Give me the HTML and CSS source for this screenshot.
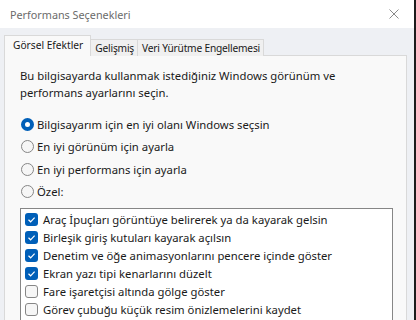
FILE: index.html
```html
<!DOCTYPE html>
<html lang="tr">
<head>
    <meta charset="UTF-8">
    <title>Performans Seçenekleri</title>
    <link rel="stylesheet" href="styles.css">
</head>
<body>
    <div class="window">
        <div class="titlebar">
            <span class="title">Performans Seçenekleri</span>
            <svg class="close" width="10" height="10" viewBox="0 0 10 10">
                <path d="M0.5 0.5 L9.5 9.5 M9.5 0.5 L0.5 9.5" stroke="#8a8a8a" stroke-width="1" fill="none"/>
            </svg>
        </div>
        <div class="dialog">
            <div class="tabs">
                <div class="tab active">Görsel Efektler</div>
                <div class="tab">Gelişmiş</div>
                <div class="tab">Veri Yürütme Engellemesi</div>
            </div>
            <div class="panel">
                <p class="intro">Bu bilgisayarda kullanmak istediğiniz Windows görünüm ve performans ayarlarını seçin.</p>
                <div class="radios">
                    <label class="radio"><span class="dot checked"></span>Bilgisayarım için en iyi olanı Windows seçsin</label>
                    <label class="radio"><span class="dot"></span>En iyi görünüm için ayarla</label>
                    <label class="radio"><span class="dot"></span>En iyi performans için ayarla</label>
                    <label class="radio"><span class="dot"></span>Özel:</label>
                </div>
                <div class="list">
                    <div class="item"><span class="box checked"></span>Araç İpuçları görüntüye belirerek ya da kayarak gelsin</div>
                    <div class="item"><span class="box checked"></span>Birleşik giriş kutuları kayarak açılsın</div>
                    <div class="item"><span class="box checked"></span>Denetim ve öğe animasyonlarını pencere içinde göster</div>
                    <div class="item"><span class="box checked"></span>Ekran yazı tipi kenarlarını düzelt</div>
                    <div class="item"><span class="box"></span>Fare işaretçisi altında gölge göster</div>
                    <div class="item"><span class="box"></span>Görev çubuğu küçük resim önizlemelerini kaydet</div>
                    <div class="item"><span class="box checked"></span></div>
                </div>
            </div>
        </div>
    </div>
</body>
</html>
```

FILE: styles.css
```css
* {
    margin: 0;
    padding: 0;
    box-sizing: border-box;
}

body {
    width: 416px;
    height: 320px;
    overflow: hidden;
    background: #1c1c1c;
    font-family: 'Noto Sans', 'Open Sans', sans-serif;
    font-size: 11.3px;
    color: #1a1a1a;
}

.window {
    width: 414px;
    height: 320px;
    background: #eef0f4;
    overflow: hidden;
}

.titlebar {
    height: 28px;
    background: #ffffff;
    display: flex;
    align-items: center;
    justify-content: space-between;
    padding: 0 15px 0 10px;
}

.title {
    color: #6b6b6b;
    font-size: 10.8px;
}

.dialog {
    padding: 7px 7px 0 4px;
}

.tabs {
    display: flex;
    align-items: flex-end;
    height: 21px;
    position: relative;
    z-index: 1;
    font-size: 10.2px;
}

.tab {
    height: 17px;
    padding: 0 3px 0 4px;
    line-height: 16px;
    border: 1px solid #d9d9d9;
    border-bottom: none;
    background: #f0f0f0;
    margin-left: -1px;
    letter-spacing: -0.2px;
}

.tab.active {
    height: 21px;
    padding: 0 7px 0 8px;
    line-height: 18px;
    background: #f9f9f9;
    margin-left: 0;
    letter-spacing: 0;
}

.panel {
    background: #f9f9f9;
    border: 1px solid #d9d9d9;
    height: 300px;
    margin-top: -1px;
    padding: 11px 13px 0 15px;
}

.intro {
    width: 340px;
    line-height: 17px;
}

.radios {
    display: flex;
    flex-direction: column;
    margin-top: 12px;
}

.radio {
    display: flex;
    align-items: center;
    height: 22.5px;
}

.dot {
    width: 13px;
    height: 13px;
    border-radius: 50%;
    border: 1px solid #868686;
    background: #f6f6f6;
    margin: 0 3px 0 1px;
}

.dot.checked {
    border: 4px solid #005fb8;
    background: #ffffff;
}

.list {
    margin-top: 5px;
    background: #ffffff;
    border: 1px solid #868686;
    height: 200px;
    padding: 1px 4px;
}

.item {
    display: flex;
    align-items: center;
    height: 18px;
}

.box {
    width: 13px;
    height: 13px;
    border-radius: 3px;
    border: 1px solid #868686;
    background: #f6f6f6;
    margin-right: 5px;
}

.box.checked {
    border: none;
    background: #005fb8 url("data:image/svg+xml;utf8,<svg xmlns='http://www.w3.org/2000/svg' width='13' height='13'><path d='M3.5 6.8 L5.6 8.8 L9.6 4.6' stroke='white' stroke-width='1.2' fill='none'/></svg>") no-repeat;
}
```
